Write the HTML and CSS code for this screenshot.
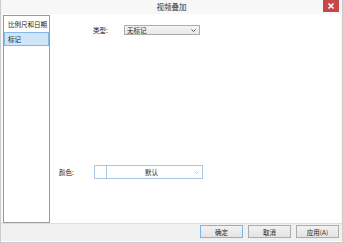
FILE: index.html
```html
<!DOCTYPE html>
<html lang="zh">
<head>
    <meta charset="UTF-8">
    <title>视频叠加</title>
    <link rel="stylesheet" href="styles.css">
</head>
<body>
    <div class="window">
        <header class="titlebar">
            <span class="title">视频叠加</span>
            <svg class="close-btn" width="16" height="12" viewBox="0 0 16 12">
                <rect width="16" height="12" fill="#c74848"/>
                <path d="M5.5 3.5 L10.5 8.5 M10.5 3.5 L5.5 8.5" stroke="#ffffff" stroke-width="1.6"/>
            </svg>
        </header>

        <div class="main">
            <!-- Left navigation list -->
            <ul class="nav-list">
                <li class="nav-item">比例尺和日期</li>
                <li class="nav-item active">标记</li>
            </ul>

            <!-- Settings panel -->
            <section class="panel">
                <div class="field type-field">
                    <label class="field-label">类型:</label>
                    <div class="select type-select">
                        <span class="value">无标记</span>
                        <svg class="arrow" width="5" height="3" viewBox="0 0 5 3">
                            <polyline points="0.5,0.5 2.5,2.5 4.5,0.5" fill="none" stroke="#555555" stroke-width="1"/>
                        </svg>
                    </div>
                </div>

                <div class="field color-field">
                    <label class="field-label">颜色:</label>
                    <div class="select color-select">
                        <span class="swatch"></span>
                        <span class="color-name">默认</span>
                        <svg class="arrow" width="5" height="3" viewBox="0 0 5 3">
                            <polyline points="0.5,0.5 2.5,2.5 4.5,0.5" fill="none" stroke="#c4c4c4" stroke-width="1"/>
                        </svg>
                    </div>
                </div>
            </section>
        </div>

        <footer class="button-bar">
            <button class="btn default">确定</button>
            <button class="btn">取消</button>
            <button class="btn">应用(A)</button>
        </footer>
    </div>
</body>
</html>
```

FILE: styles.css
```css
:root {
    --border-color: #cbcbcb;
    --list-border: #9c9c9c;
    --bar-color: #f0f0f0;
    --text-color: #222222;
    --accent: #cfe6f8;
    --accent-border: #84b9ea;
}

* {
    box-sizing: border-box;
    margin: 0;
    padding: 0;
}

body {
    font-family: "Noto Sans CJK SC", "Liberation Sans", sans-serif;
    font-size: 6.5px;
    color: var(--text-color);
    background-color: #ffffff;
}

.window {
    width: 343px;
    height: 243px;
    border: 1px solid var(--border-color);
    border-top: none;
    background-color: #f7f7f7;
    display: flex;
    flex-direction: column;
}

.titlebar {
    height: 14px;
    position: relative;
    display: flex;
    justify-content: center;
    align-items: center;
}

.title {
    font-size: 7.5px;
    color: #333;
    padding-bottom: 1px;
}

.close-btn {
    position: absolute;
    right: 3px;
    top: 0;
}

.main {
    flex: 1;
    display: flex;
    margin: 0 1px 0 2px;
    padding-top: 1px;
    background-color: #ffffff;
}

.nav-list {
    list-style: none;
    width: 47px;
    border: 1px solid var(--list-border);
    padding-top: 2px;
    background-color: #ffffff;
}

.nav-item {
    height: 13px;
    line-height: 13px;
    padding-left: 4px;
    white-space: nowrap;
}

.nav-item.active {
    margin: 1px 0 0 0;
    height: 14px;
    background-color: var(--accent);
    border: 1px solid var(--accent-border);
    line-height: 12px;
    padding-left: 3px;
}

.panel {
    flex: 1;
    background-color: #ffffff;
}

.field {
    display: flex;
    align-items: center;
}

.type-field {
    margin: 10px 0 0 43px;
}

.type-field .field-label {
    width: 31px;
}

.color-field {
    margin: 130px 0 0 9px;
}

.color-field .field-label {
    width: 35px;
}

.select {
    display: flex;
    align-items: center;
    border: 1px solid #b9b9b9;
    background-color: #ffffff;
}

.type-select {
    width: 76px;
    height: 10px;
    padding-left: 2px;
    background: linear-gradient(#f5f5f5, #e8e8e8);
    border-color: #acacac;
}

.value {
    flex: 1;
}

.arrow {
    margin: 0 3px 0 2px;
}

.color-select {
    width: 109px;
    height: 14px;
    border-color: #a9c6e4;
}

.swatch {
    width: 12px;
    height: 12px;
    border-right: 1px solid #a9c6e4;
}

.color-name {
    flex: 1;
    text-align: center;
    padding-left: 4px;
}

.button-bar {
    height: 19px;
    display: flex;
    justify-content: flex-end;
    align-items: center;
    gap: 5px;
    padding: 0 3px 2px 0;
    background-color: var(--bar-color);
    border-top: 1px solid #dedede;
    border-bottom: 1px solid #ffffff;
}

.btn {
    width: 43px;
    height: 13px;
    font-family: inherit;
    font-size: 6.5px;
    color: var(--text-color);
    border: 1px solid #acacac;
    background: linear-gradient(#f2f2f2, #e4e4e4);
}

.btn.default {
    border-color: #7fb3e6;
}
```
